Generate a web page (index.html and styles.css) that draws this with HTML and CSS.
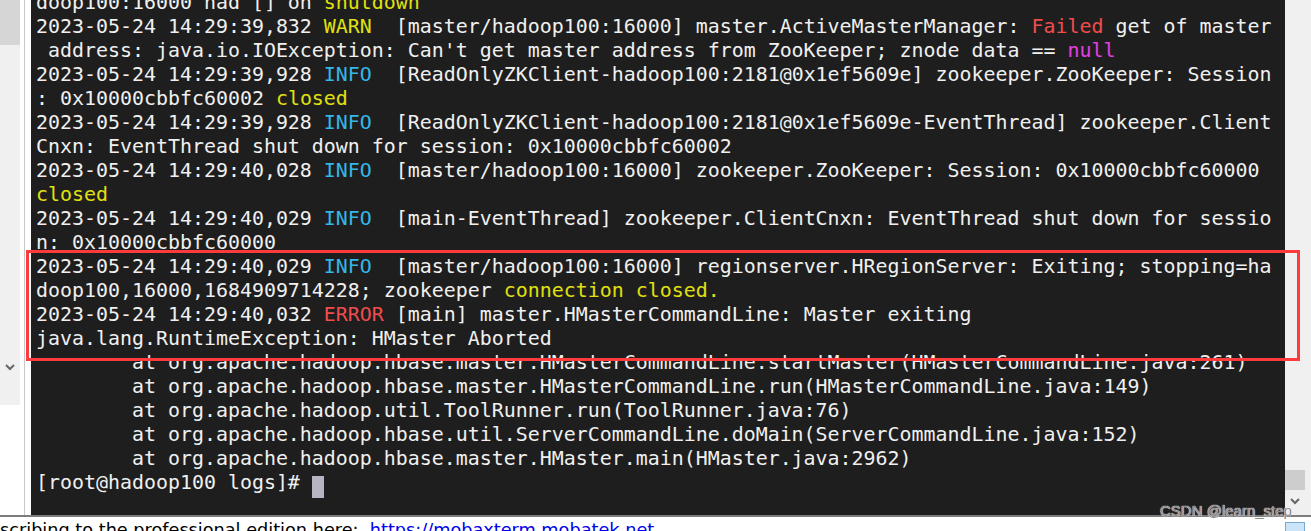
FILE: index.html
```html
<!DOCTYPE html>
<html>
<head>
<meta charset="utf-8">
<link rel="stylesheet" href="styles.css">
</head>
<body>
<div class="app">
  <div class="main">
    <div class="sidebar">
      <div class="side-top"></div>
      <div class="side-mid">
        <svg class="chev chev-left" width="10" height="8" viewBox="0 0 10 8"><path d="M1 2 L5 6 L9 2" fill="none" stroke="#666" stroke-width="2"/></svg>
      </div>
      <div class="side-bot"></div>
    </div>
    <div class="divider"></div>
    <div class="terminal">
      <div class="lines">
<div class="ln">doop100:16000 had [] on <span class="y">shutdown</span></div>
<div class="ln">2023-05-24 14:29:39,832 <span class="y">WARN</span>  [master/hadoop100:16000] master.ActiveMasterManager: <span class="r">Failed</span> get of master</div>
<div class="ln"> address: java.io.IOException: Can't get master address from ZooKeeper; znode data == <span class="m">null</span></div>
<div class="ln">2023-05-24 14:29:39,928 <span class="c">INFO</span>  [ReadOnlyZKClient-hadoop100:2181@0x1ef5609e] zookeeper.ZooKeeper: Session</div>
<div class="ln">: 0x10000cbbfc60002 <span class="y">closed</span></div>
<div class="ln">2023-05-24 14:29:39,928 <span class="c">INFO</span>  [ReadOnlyZKClient-hadoop100:2181@0x1ef5609e-EventThread] zookeeper.Client</div>
<div class="ln">Cnxn: EventThread shut down for session: 0x10000cbbfc60002</div>
<div class="ln">2023-05-24 14:29:40,028 <span class="c">INFO</span>  [master/hadoop100:16000] zookeeper.ZooKeeper: Session: 0x10000cbbfc60000</div>
<div class="ln"><span class="y">closed</span></div>
<div class="ln">2023-05-24 14:29:40,029 <span class="c">INFO</span>  [main-EventThread] zookeeper.ClientCnxn: EventThread shut down for sessio</div>
<div class="ln">n: 0x10000cbbfc60000</div>
<div class="ln">2023-05-24 14:29:40,029 <span class="c">INFO</span>  [master/hadoop100:16000] regionserver.HRegionServer: Exiting; stopping=ha</div>
<div class="ln">doop100,16000,1684909714228; zookeeper <span class="y">connection closed.</span></div>
<div class="ln">2023-05-24 14:29:40,032 <span class="r">ERROR</span> [main] master.HMasterCommandLine: Master exiting</div>
<div class="ln">java.lang.RuntimeException: HMaster Aborted</div>
<div class="ln">        at org.apache.hadoop.hbase.master.HMasterCommandLine.startMaster(HMasterCommandLine.java:261)</div>
<div class="ln">        at org.apache.hadoop.hbase.master.HMasterCommandLine.run(HMasterCommandLine.java:149)</div>
<div class="ln">        at org.apache.hadoop.util.ToolRunner.run(ToolRunner.java:76)</div>
<div class="ln">        at org.apache.hadoop.hbase.util.ServerCommandLine.doMain(ServerCommandLine.java:152)</div>
<div class="ln">        at org.apache.hadoop.hbase.master.HMaster.main(HMaster.java:2962)</div>
<div class="ln">[root@hadoop100 logs]# <span class="cursor"> </span></div>
      </div>
    </div>
    <div class="scrollbar">
      <div class="sb-thumb"></div>
      <div class="sb-arrow">
        <svg width="10" height="8" viewBox="0 0 10 8"><path d="M1 2 L5 6 L9 2" fill="none" stroke="#666" stroke-width="2"/></svg>
      </div>
    </div>
  </div>
  <div class="status">
    <span class="status-text">scribing to the professional edition here:&nbsp; <a class="link">https://mobaxterm.mobatek.net</a></span>
    <div class="status-box"></div>
  </div>
  <div class="highlight"></div>
  <div class="watermark">CSDN @learn_step</div>
</div>
</body>
</html>
```

FILE: styles.css
```css
html, body {
  margin: 0;
  padding: 0;
  background: #ffffff;
  overflow: hidden;
}

.app {
  position: relative;
  width: 1311px;
  height: 531px;
  display: flex;
  flex-direction: column;
}

.main {
  display: flex;
  height: 515px;
}

.sidebar {
  width: 20px;
  display: flex;
  flex-direction: column;
}

.side-top {
  height: 45px;
  background: #d6d6d6;
}

.side-mid {
  height: 360px;
  background: #f0f0f0;
  display: flex;
  flex-direction: column;
  justify-content: flex-end;
  align-items: center;
}

.chev-left {
  margin-bottom: 34px;
}

.side-bot {
  flex: 1;
  background: #ffffff;
}

.divider {
  width: 11px;
  box-sizing: border-box;
  border-left: 4px solid #ffffff;
  border-right: 6px solid #ffffff;
  background: #c8c8c8;
}

.terminal {
  position: relative;
  width: 1254px;
  background: #1e1e1e;
  overflow: hidden;
}

.lines {
  margin-top: -9px;
  padding-left: 5px;
  font-family: "DejaVu Sans Mono", "Liberation Mono", monospace;
  font-size: 19.93px;
  line-height: 24px;
  color: #f0f0f0;
}

.ln {
  height: 24px;
  white-space: pre;
}

.y { color: #e0e010; }
.c { color: #35b6e6; }
.r { color: #f14c4c; }
.m { color: #e43fe4; }

.cursor {
  display: inline-block;
  width: 12px;
  height: 22px;
  vertical-align: -5px;
  background: #b5b5c4;
}

.highlight {
  position: absolute;
  left: 26px;
  top: 250px;
  width: 1274px;
  height: 111px;
  box-sizing: border-box;
  border: 3px solid #ff3b3b;
}

.scrollbar {
  position: relative;
  flex: 1;
  background: #f0f0f0;
}

.sb-thumb {
  position: absolute;
  left: 0;
  top: 470px;
  width: 20px;
  height: 20px;
  background: #cdcdcd;
}

.sb-arrow {
  position: absolute;
  left: 5px;
  top: 497px;
  width: 10px;
  height: 8px;
  display: flex;
}

.status {
  position: relative;
  flex: 1;
  border-top: 2px solid #7d7d7d;
  background: #ffffff;
  overflow: hidden;
}

.status-text {
  display: block;
  margin-top: 3px;
  font-family: "DejaVu Sans", "Liberation Sans", sans-serif;
  font-size: 17.7px;
  line-height: 20px;
  color: #000000;
  white-space: pre;
}

.link {
  color: #0000ee;
  text-decoration: underline;
}

.status-box {
  position: absolute;
  left: 1285px;
  top: 5px;
  width: 20px;
  height: 14px;
  box-sizing: border-box;
  background: #cce4f7;
  border: 1px solid #7aa9d6;
}

.watermark {
  position: absolute;
  left: 1160px;
  top: 502px;
  font-family: "Liberation Sans", Arial, sans-serif;
  font-size: 15px;
  color: #8a8a8a;
  text-shadow: 0 0 1px #ffffff, 0 0 1px #ffffff;
}
```
